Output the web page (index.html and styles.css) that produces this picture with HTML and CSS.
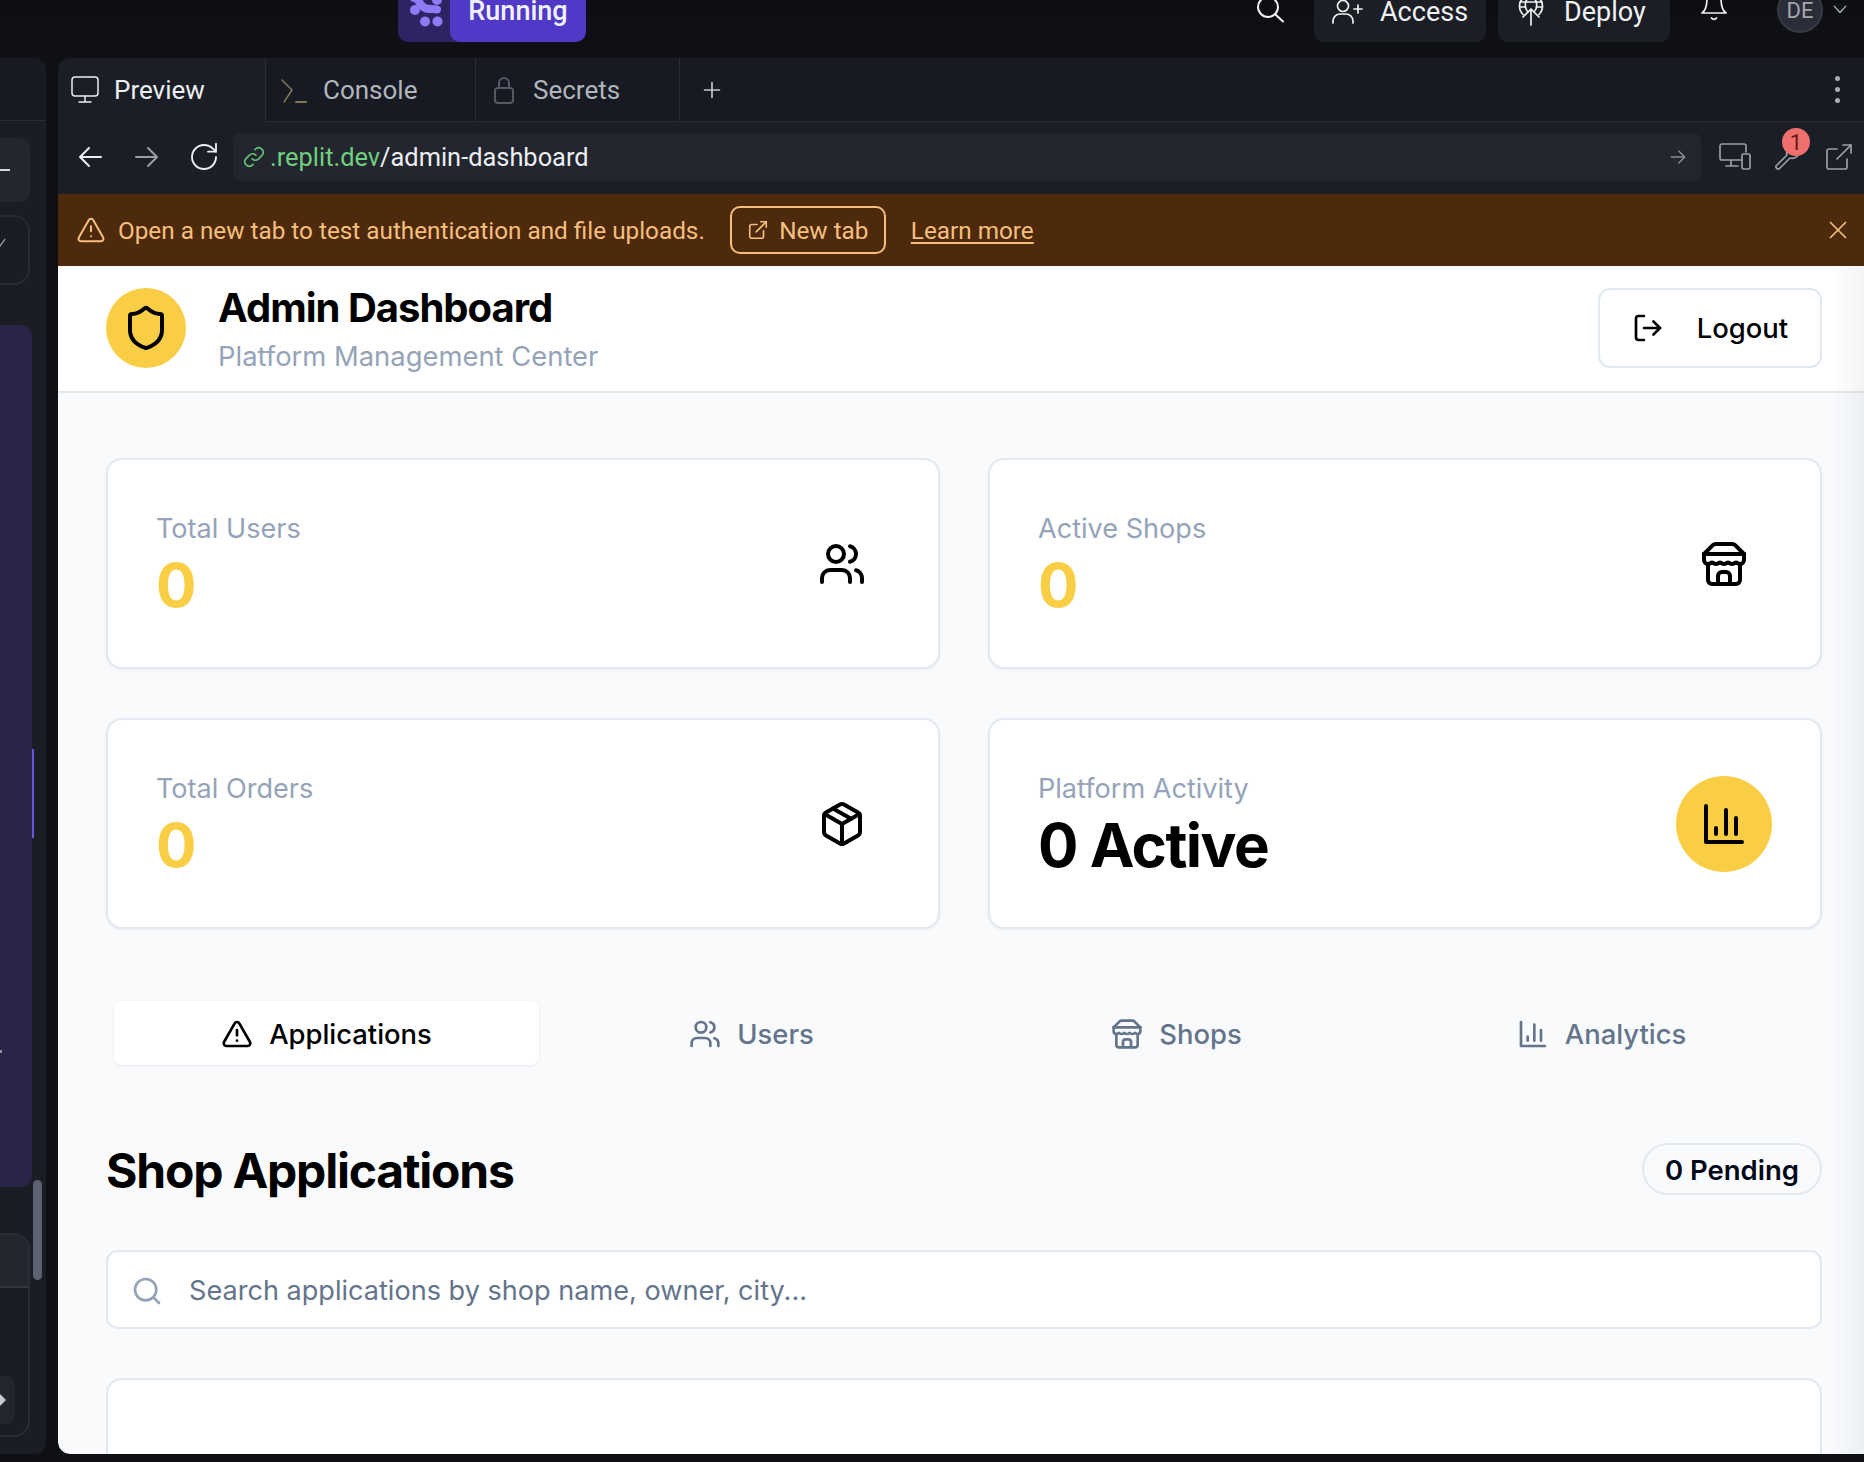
FILE: index.html
```html
<!DOCTYPE html>
<html lang="en">
<head>
<meta charset="UTF-8">
<title>Admin Dashboard</title>
<link rel="stylesheet" href="styles.css">
</head>
<body>
<div class="topbar">
    <div class="run-group">
        <span class="run-logo">
            <svg width="40" height="28" viewBox="0 0 40 28">
                <circle cx="11" cy="10" r="5"/><circle cx="21" cy="21.5" r="5"/><circle cx="33.5" cy="21.5" r="5"/><circle cx="33" cy="0" r="5"/>
                <path class="run-wave" d="M10 -2c5 0 6 9 12 10.500 4 1 8 0 11 1"/>
            </svg>
        </span>
        <span class="run-btn">Running</span>
    </div>
    <div class="top-right">
        <svg class="top-search" viewBox="0 0 34 34"><circle cx="14" cy="14" r="10"/><path d="M21.500 21.500 29 28.500"/></svg>
        <span class="top-btn">
            <svg class="top-btn-icon" viewBox="0 0 34 34"><circle cx="13" cy="11" r="5.500"/><path d="M3 28v-2a7 7 0 0 1 7-7h6a7 7 0 0 1 7 7v2"/><path d="M28 10v8M24 14h8"/></svg>
            Access
        </span>
        <span class="top-btn">
            <svg class="top-btn-icon" viewBox="0 0 34 34"><path d="M9 19.500a11.500 11.500 0 1 1 16 0"/><path d="M17 0c-7 5-7 13-3 17M17 0c7 5 7 13 3 17M6 7h22M6 12h5M23 12h5"/><path d="M17 30V14M9 22l8-8 8 8"/></svg>
            Deploy
        </span>
        <svg class="top-bell" viewBox="0 0 28 34"><path d="M7 8a7 7 0 0 1 14 0c0 9 2 13 5 15H2c3-2 5-6 5-15"/><path d="M11.500 28a3 3 0 0 0 5 0"/></svg>
        <span class="avatar">DE</span>
        <svg class="chevron" viewBox="0 0 24 24"><path d="m2 7 10 11L22 7"/></svg>
    </div>
</div>

<div class="workspace">
    <div class="side-pane">
        <div class="side-head"></div>
        <div class="side-plus"><i></i></div>
        <div class="side-outline"><svg width="14" height="14" viewBox="0 0 24 24"><path d="m2 8 10 10 10-14"/></svg></div>
        <div class="side-chat"><i class="side-tick"></i><i class="side-marker"></i></div>
        <div class="side-bottom">
            <div class="side-input"></div>
            <div class="side-send"><i></i></div>
        </div>
        <i class="side-scroll"></i>
    </div>

    <div class="main-pane">
        <div class="tabs">
            <div class="tab active">
                <svg class="tab-icon" viewBox="0 0 28 28"><rect x="1" y="1" width="26" height="19" rx="3"/><path d="M14 20v6M8 26h12"/></svg>
                Preview
            </div>
            <div class="tab">
                <svg class="tab-icon console" viewBox="0 0 28 28"><path d="m2 4 10 10-8 12"/><path class="prompt" d="M16 26h10"/></svg>
                Console
            </div>
            <div class="tab">
                <svg class="tab-icon lock" viewBox="0 0 28 28"><rect x="5" y="12" width="18" height="15" rx="3"/><path d="M9 12V7a5 5 0 0 1 10 0v5"/></svg>
                Secrets
            </div>
            <svg class="plus" viewBox="0 0 24 24"><path d="M12 3v18M3 12h18"/></svg>
            <div class="kebab"><i></i><i></i><i></i></div>
        </div>

        <div class="urlbar">
            <svg class="nav-icon" viewBox="0 0 24 24"><path d="M23 12H2M11 3l-9 9 9 9"/></svg>
            <svg class="nav-icon dim" viewBox="0 0 24 24"><path d="M1 12h21M13 3l9 9-9 9"/></svg>
            <svg class="nav-icon" viewBox="0 0 24 24"><path d="M21 12a9 9 0 1 1-9-9c2.520 0 4.930 1 6.740 2.740L21 8"/><path d="M21 2v6h-6"/></svg>
            <div class="url-input">
                <svg class="link-icon" viewBox="0 0 24 24"><path d="M10 14a5 5 0 0 0 7 0l4-4a5 5 0 0 0-7-7l-1 1"/><path d="M14 10a5 5 0 0 0-7 0l-4 4a5 5 0 0 0 7 7l1-1"/></svg>
                <span class="url-host">.replit.dev</span><span class="url-path">/admin-dashboard</span>
                <svg class="go-icon" viewBox="0 0 24 24"><path d="M3 12h18M13 4l8 8-8 8"/></svg>
            </div>
            <div class="url-tools">
                <svg class="tool-icon" viewBox="0 0 32 28"><path d="M22 17H3a2 2 0 0 1-2-2V3a2 2 0 0 1 2-2h22a2 2 0 0 1 2 2v6"/><path d="M12 17v6M7 23h12"/><rect x="23" y="11" width="8" height="15" rx="1.500"/></svg>
                <span class="tool-wrap">
                    <svg class="tool-icon" viewBox="0 0 28 28"><path d="M22 3a7 7 0 0 0-8 9L3 23a2.500 2.500 0 0 0 3 3l11-11a7 7 0 0 0 9-8l-5 4-4-1-1-4z"/></svg>
                    <span class="badge">1</span>
                </span>
                <svg class="tool-icon" viewBox="0 0 28 28"><path d="M18 2h8v8"/><path d="M12 16 26 2"/><path d="M22 16v8a2 2 0 0 1-2 2H4a2 2 0 0 1-2-2V8a2 2 0 0 1 2-2h8"/></svg>
            </div>
        </div>

        <div class="notice">
            <svg class="notice-icon" viewBox="0 0 24 24"><path d="m21.730 18-8-14a2 2 0 0 0-3.480 0l-8 14A2 2 0 0 0 4 21h16a2 2 0 0 0 1.730-3"/><path d="M12 9v4"/><path d="M12 17h.01"/></svg>
            <span>Open a new tab to test authentication and file uploads.</span>
            <span class="notice-btn">
                <svg viewBox="0 0 24 24"><path d="M15 3h6v6"/><path d="M10 14 21 3"/><path d="M18 13v6a2 2 0 0 1-2 2H5a2 2 0 0 1-2-2V8a2 2 0 0 1 2-2h6"/></svg>
                New tab
            </span>
            <a class="notice-link">Learn more</a>
            <svg class="notice-close" viewBox="0 0 24 24"><path d="M3 3l18 18M21 3 3 21"/></svg>
        </div>

        <div class="page">
            <div class="page-head">
                <div class="brand">
                    <span class="brand-mark">
                        <svg class="icon-lg" viewBox="0 0 24 24"><path d="M20 13c0 5-3.500 7.500-7.660 8.950a1 1 0 0 1-.67-.01C7.500 20.500 4 18 4 13V6a1 1 0 0 1 1-1c2 0 4.500-1.200 6.240-2.720a1.170 1.170 0 0 1 1.520 0C14.510 3.810 17 5 19 5a1 1 0 0 1 1 1z"/></svg>
                    </span>
                    <div class="brand-text">
                        <h1>Admin Dashboard</h1>
                        <p>Platform Management Center</p>
                    </div>
                </div>
                <button class="logout">
                    <svg viewBox="0 0 24 24"><path d="M9 21H5a2 2 0 0 1-2-2V5a2 2 0 0 1 2-2h4"/><polyline points="16 17 21 12 16 7"/><line x1="21" x2="9" y1="12" y2="12"/></svg>
                    Logout
                </button>
            </div>

            <div class="content">
                <div class="stats">
                    <div class="card">
                        <div class="card-text">
                            <div class="card-label">Total Users</div>
                            <div class="card-value">0</div>
                        </div>
                        <span class="card-icon">
                            <svg class="icon-lg" viewBox="0 0 24 24"><path d="M16 21v-2a4 4 0 0 0-4-4H6a4 4 0 0 0-4 4v2"/><circle cx="9" cy="7" r="4"/><path d="M22 21v-2a4 4 0 0 0-3-3.870"/><path d="M16 3.130a4 4 0 0 1 0 7.750"/></svg>
                        </span>
                    </div>
                    <div class="card">
                        <div class="card-text">
                            <div class="card-label">Active Shops</div>
                            <div class="card-value">0</div>
                        </div>
                        <span class="card-icon">
                            <svg class="icon-lg" viewBox="0 0 24 24"><path d="m2 7 4.410-4.410A2 2 0 0 1 7.830 2h8.340a2 2 0 0 1 1.420.59L22 7"/><path d="M4 12v8a2 2 0 0 0 2 2h12a2 2 0 0 0 2-2v-8"/><path d="M15 22v-4a2 2 0 0 0-2-2h-2a2 2 0 0 0-2 2v4"/><path d="M2 7h20"/><path d="M22 7v3a2 2 0 0 1-2 2a2.700 2.700 0 0 1-1.590-.63.7.7 0 0 0-.82 0A2.700 2.700 0 0 1 16 12a2.700 2.700 0 0 1-1.590-.63.7.7 0 0 0-.82 0A2.700 2.700 0 0 1 12 12a2.700 2.700 0 0 1-1.590-.63.7.7 0 0 0-.82 0A2.700 2.700 0 0 1 8 12a2.700 2.700 0 0 1-1.590-.63.7.7 0 0 0-.82 0A2.700 2.700 0 0 1 4 12a2 2 0 0 1-2-2V7"/></svg>
                        </span>
                    </div>
                    <div class="card">
                        <div class="card-text">
                            <div class="card-label">Total Orders</div>
                            <div class="card-value">0</div>
                        </div>
                        <span class="card-icon">
                            <svg class="icon-lg" viewBox="0 0 24 24"><path d="m7.500 4.270 9 5.150"/><path d="M21 8a2 2 0 0 0-1-1.730l-7-4a2 2 0 0 0-2 0l-7 4A2 2 0 0 0 3 8v8a2 2 0 0 0 1 1.730l7 4a2 2 0 0 0 2 0l7-4A2 2 0 0 0 21 16Z"/><path d="m3.300 7 8.700 5 8.700-5"/><path d="M12 22V12"/></svg>
                        </span>
                    </div>
                    <div class="card">
                        <div class="card-text">
                            <div class="card-label">Platform Activity</div>
                            <div class="card-value dark">0 Active</div>
                        </div>
                        <span class="card-icon filled">
                            <svg class="icon-lg" viewBox="0 0 24 24"><path d="M3 3v18h18"/><path d="M18 17V9"/><path d="M13 17V5"/><path d="M8 17v-3"/></svg>
                        </span>
                    </div>
                </div>

                <div class="section-tabs">
                    <div class="section-tab active">
                        <svg viewBox="0 0 24 24"><path d="m21.730 18-8-14a2 2 0 0 0-3.480 0l-8 14A2 2 0 0 0 4 21h16a2 2 0 0 0 1.730-3"/><path d="M12 9v4"/><path d="M12 17h.01"/></svg>
                        Applications
                    </div>
                    <div class="section-tab">
                        <svg viewBox="0 0 24 24"><path d="M16 21v-2a4 4 0 0 0-4-4H6a4 4 0 0 0-4 4v2"/><circle cx="9" cy="7" r="4"/><path d="M22 21v-2a4 4 0 0 0-3-3.870"/><path d="M16 3.130a4 4 0 0 1 0 7.750"/></svg>
                        Users
                    </div>
                    <div class="section-tab">
                        <svg viewBox="0 0 24 24"><path d="m2 7 4.410-4.410A2 2 0 0 1 7.830 2h8.340a2 2 0 0 1 1.420.59L22 7"/><path d="M4 12v8a2 2 0 0 0 2 2h12a2 2 0 0 0 2-2v-8"/><path d="M15 22v-4a2 2 0 0 0-2-2h-2a2 2 0 0 0-2 2v4"/><path d="M2 7h20"/><path d="M22 7v3a2 2 0 0 1-2 2a2.700 2.700 0 0 1-1.590-.63.7.7 0 0 0-.82 0A2.700 2.700 0 0 1 16 12a2.700 2.700 0 0 1-1.590-.63.7.7 0 0 0-.82 0A2.700 2.700 0 0 1 12 12a2.700 2.700 0 0 1-1.590-.63.7.7 0 0 0-.82 0A2.700 2.700 0 0 1 8 12a2.700 2.700 0 0 1-1.590-.63.7.7 0 0 0-.82 0A2.700 2.700 0 0 1 4 12a2 2 0 0 1-2-2V7"/></svg>
                        Shops
                    </div>
                    <div class="section-tab">
                        <svg viewBox="0 0 24 24"><path d="M3 3v18h18"/><path d="M18 17V9"/><path d="M13 17V5"/><path d="M8 17v-3"/></svg>
                        Analytics
                    </div>
                </div>

                <div class="section-head">
                    <h2>Shop Applications</h2>
                    <span class="pending">0 Pending</span>
                </div>

                <div class="search">
                    <svg viewBox="0 0 24 24"><circle cx="11" cy="11" r="8"/><path d="m21 21-4.300-4.300"/></svg>
                    <span>Search applications by shop name, owner, city...</span>
                </div>

                <div class="list-card"></div>
            </div>
            <i class="edge-shade"></i>
        </div>
    </div>
</div>
</body>
</html>
```

FILE: styles.css
```css
* {
    box-sizing: border-box;
}
html, body {
    margin: 0;
    width: 1864px;
    height: 1462px;
    overflow: hidden;
}
body {
    background: #0e1014;
    font-family: Inter, "Liberation Sans", sans-serif;
}
svg {
    fill: none;
    stroke: currentColor;
    stroke-linecap: round;
    stroke-linejoin: round;
    flex: none;
}
i {
    display: block;
}

/* top bar */
.topbar {
    height: 58px;
    padding-bottom: 16px;
    display: flex;
    align-items: flex-end;
    overflow: hidden;
    font-family: Roboto, sans-serif;
    color: #f0f1f3;
    background: linear-gradient(#0c0e12, #0f1116);
}
.run-group {
    margin-left: 398px;
    display: flex;
    height: 60px;
    border-radius: 0 0 10px 10px;
    background: #2d2463;
    overflow: hidden;
}
.run-logo {
    width: 52px;
    display: flex;
    justify-content: center;
    align-items: flex-start;
    margin-top: 18px;
}
.run-logo svg {
    stroke: none;
    fill: #8f7bf5;
    overflow: visible;
}
.run-logo .run-wave {
    fill: none;
    stroke: #8f7bf5;
    stroke-width: 8;
}
.run-btn {
    width: 136px;
    padding-top: 19px;
    border-radius: 10px 0 10px 10px;
    background: #4f39c6;
    font-size: 27px;
    font-weight: 500;
    line-height: 20px;
    text-align: center;
}
.top-right {
    margin-left: auto;
    padding-right: 17px;
    display: flex;
    align-items: center;
    height: 60px;
}
.top-search {
    width: 34px;
    height: 34px;
    margin: 0 26px 5px 0;
    stroke-width: 2;
}
.top-btn {
    width: 172px;
    height: 60px;
    margin-right: 12px;
    padding: 0 0 1px 16px;
    display: flex;
    align-items: center;
    gap: 16px;
    border-radius: 10px;
    background: #1b1e25;
    font-size: 27px;
    line-height: 20px;
}
.top-btn-icon {
    width: 34px;
    height: 34px;
    stroke-width: 1.7;
}
.top-bell {
    width: 28px;
    height: 34px;
    margin: 0 0 10px 18px;
    stroke-width: 1.7;
}
.avatar {
    width: 46px;
    height: 46px;
    margin: 5px 0 0 49px;
    align-self: flex-start;
    display: flex;
    align-items: center;
    justify-content: center;
    border: 2px solid #363a44;
    border-radius: 50%;
    background: #2a2d37;
    color: #a2a6b0;
    font-size: 22px;
}
.chevron {
    width: 14px;
    height: 14px;
    margin: 0 0 6px 10px;
    stroke-width: 2;
    color: #b8bcc4;
}

/* panes */
.workspace {
    height: 1396px;
    display: flex;
    gap: 12px;
}
.side-pane {
    width: 46px;
    height: 1396px;
    position: relative;
    padding-right: 16px;
    overflow: hidden;
    border-radius: 0 12px 12px 0;
    background: #1a1d24;
}
.side-head {
    height: 63px;
    margin-right: -16px;
    border-bottom: 1px solid #2a2d35;
    background: #171a21;
}
.side-plus {
    height: 64px;
    margin: 17px 0 0 -20px;
    position: relative;
    border-radius: 10px;
    background: #23262e;
}
.side-plus i {
    position: absolute;
    right: 20px;
    top: 31px;
    width: 10px;
    height: 2px;
    background: #d5d7dc;
}
.side-outline {
    height: 70px;
    margin: 13px 0 0 -20px;
    position: relative;
    border: 2px solid #282b33;
    border-radius: 16px;
    color: #8f939c;
}
.side-outline svg {
    position: absolute;
    left: 10px;
    top: 20px;
    stroke-width: 2.5;
}
.side-chat {
    height: 862px;
    margin: 40px -2px 0 -20px;
    position: relative;
    border-radius: 12px;
    background: #2a2546;
}
.side-marker {
    position: absolute;
    right: -2px;
    top: 424px;
    width: 2px;
    height: 89px;
    background: #6a55e0;
}
.side-tick {
    position: absolute;
    left: 20px;
    top: 725px;
    width: 2px;
    height: 3px;
    background: #8f939c;
}
.side-bottom {
    height: 204px;
    margin: 46px 0 0 -20px;
    position: relative;
    border: 2px solid #2a2d35;
    border-radius: 16px;
    background: #1a1d24;
}
.side-input {
    height: 53px;
    border-bottom: 2px solid #33363e;
    background: #23262e;
    border-radius: 14px 14px 0 0;
}
.side-send {
    position: absolute;
    left: 0;
    right: 13px;
    bottom: 11px;
    height: 48px;
    border-radius: 8px;
    background: #23262e;
}
.side-send i {
    position: absolute;
    right: 9px;
    top: 18px;
    width: 0;
    height: 0;
    border-left: 6px solid #c9ccd2;
    border-top: 6px solid transparent;
    border-bottom: 6px solid transparent;
}
.side-scroll {
    position: absolute;
    left: 33px;
    top: 1122px;
    width: 9px;
    height: 100px;
    border-radius: 5px;
    background: #5c6270;
}
.main-pane {
    flex: 1;
    min-width: 0;
    height: 1396px;
    display: flex;
    flex-direction: column;
    overflow: hidden;
    border-radius: 12px 0 0 12px;
    background: #1a1e26;
}

/* tab row */
.tabs {
    height: 64px;
    flex: none;
    display: flex;
    align-items: center;
    border-bottom: 1px solid #2a2d35;
    background: #171a22;
    font-family: Roboto, sans-serif;
    font-size: 26px;
    color: #b1b5bc;
}
.tab {
    height: 63px;
    width: 210px;
    padding-left: 14px;
    display: flex;
    align-items: center;
    gap: 15px;
    border-right: 1px solid #2a2d35;
}
.tab.active {
    width: 208px;
    margin-bottom: -1px;
    height: 64px;
    padding-left: 13px;
    background: #1a1e26;
    color: #eceef1;
}
.tab:nth-child(3) {
    width: 204px;
}
.tab-icon {
    width: 28px;
    height: 28px;
    stroke-width: 1.5;
}
.console {
    color: #7e7a55;
}
.console .prompt {
    stroke-width: 2;
}
.lock {
    color: #555a64;
    stroke-width: 2;
}
.plus {
    width: 20px;
    height: 20px;
    margin-left: 22px;
    stroke-width: 2;
    color: #c3c6cc;
}
.kebab {
    margin-left: auto;
    margin-right: 24px;
    display: flex;
    flex-direction: column;
    gap: 6px;
}
.kebab i {
    width: 5px;
    height: 5px;
    border-radius: 50%;
    background: #a9adb5;
}

/* address row */
.urlbar {
    height: 70px;
    flex: none;
    padding: 0 0 0 20px;
    display: flex;
    align-items: center;
}
.nav-icon {
    width: 24px;
    height: 24px;
    margin-right: 32px;
    color: #eceef1;
    stroke-width: 2;
}
.nav-icon.dim {
    margin-left: 1px;
    color: #9a9ea6;
}
.nav-icon:nth-child(3) {
    width: 32px;
    height: 32px;
    margin-right: 13px;
    margin-left: -3px;
    stroke-width: 1.4;
}
.url-input {
    width: 1468px;
    height: 48px;
    padding: 0 14px 0 10px;
    display: flex;
    align-items: center;
    border-radius: 8px;
    background: #23262e;
    font-family: Roboto, sans-serif;
    font-size: 25.4px;
}
.link-icon {
    width: 22px;
    height: 22px;
    margin-right: 5px;
    stroke-width: 1.8;
    color: #63c174;
}
.url-host {
    color: #6fcf7f;
}
.url-path {
    color: #eceef1;
}
.go-icon {
    width: 18px;
    height: 18px;
    margin-left: auto;
    stroke-width: 1.8;
    color: #8a8e96;
}
.url-tools {
    display: flex;
    align-items: center;
    gap: 20px;
    padding-left: 18px;
}
.tool-icon {
    width: 32px;
    height: 28px;
    stroke-width: 1.7;
    color: #9a9ea6;
}
.tool-wrap {
    position: relative;
    display: flex;
}
.badge {
    position: absolute;
    left: 11px;
    top: -15px;
    width: 28px;
    height: 28px;
    display: flex;
    align-items: center;
    justify-content: center;
    border-radius: 50%;
    background: #ef6f6c;
    color: #6b1414;
    font-family: Roboto, sans-serif;
    font-size: 22px;
}

/* warning strip */
.notice {
    height: 72px;
    flex: none;
    margin-top: 2px;
    padding: 0 16px 0 18px;
    display: flex;
    align-items: center;
    background: #4e2a0c;
    color: #f5bf7e;
    font-family: Roboto, sans-serif;
    font-size: 24.3px;
}
.notice-icon {
    width: 30px;
    height: 30px;
    margin-right: 12px;
    stroke-width: 1.6;
}
.notice-btn {
    width: 156px;
    height: 48px;
    margin-left: 25px;
    display: flex;
    align-items: center;
    justify-content: center;
    gap: 10px;
    border: 2px solid #f5bf7e;
    border-radius: 10px;
}
.notice-btn svg {
    width: 22px;
    height: 22px;
    stroke-width: 1.8;
}
.notice-link {
    margin-left: 25px;
    text-decoration: underline;
    text-underline-offset: 3px;
}
.notice-close {
    width: 20px;
    height: 20px;
    margin-left: auto;
    stroke-width: 2;
}

/* page in the preview */
.page {
    flex: 1;
    min-height: 0;
    position: relative;
    overflow: hidden;
    border-radius: 0 0 0 12px;
    background: #f8fafc;
}
.page-head {
    height: 127px;
    padding: 0 42px 2px 48px;
    display: flex;
    align-items: center;
    justify-content: space-between;
    background: #fff;
    border-bottom: 2px solid #e2e8f0;
}
.brand {
    display: flex;
    align-items: center;
    gap: 32px;
}
.brand-mark {
    width: 80px;
    height: 80px;
    display: flex;
    align-items: center;
    justify-content: center;
    border-radius: 50%;
    background: #f9ce45;
}
.brand-text {
    margin-top: 9px;
}
.icon-lg {
    width: 48px;
    height: 48px;
    stroke-width: 2;
    color: #000;
}
h1 {
    margin: 0;
    font-size: 40px;
    font-weight: 700;
    letter-spacing: -0.025em;
    line-height: 48px;
    color: #000;
}
.brand p {
    margin: 0;
    font-size: 27.4px;
    line-height: 48px;
    color: #94a3b8;
}
.logout {
    width: 224px;
    height: 80px;
    padding: 0 32px;
    display: flex;
    align-items: center;
    justify-content: space-between;
    border: 2px solid #e2e8f0;
    border-radius: 12px;
    background: #fff;
    font-family: inherit;
    font-size: 27.4px;
    font-weight: 500;
    color: #000;
}
.logout svg {
    width: 32px;
    height: 32px;
    stroke-width: 2;
}
.content {
    padding: 65px 42px 0 48px;
}
.stats {
    display: grid;
    grid-template-columns: 1fr 1fr;
    gap: 49px 48px;
}
.card {
    height: 211px;
    padding: 0 48px;
    display: flex;
    align-items: center;
    justify-content: space-between;
    border: 2px solid #e2e8f0;
    border-radius: 16px;
    background: #fff;
    box-shadow: 0 1px 3px rgba(15, 23, 42, 0.06);
}
.card-text {
    padding-top: 2px;
}
.card-label {
    font-size: 27.1px;
    line-height: 40px;
    color: #94a3b8;
}
.card-value {
    font-size: 60px;
    font-weight: 700;
    letter-spacing: -0.025em;
    line-height: 72px;
    color: #f9ce45;
}
.card-value.dark {
    color: #000;
}
.card-icon {
    width: 96px;
    height: 96px;
    display: flex;
    align-items: center;
    justify-content: center;
    border-radius: 50%;
}
.card-icon.filled {
    background: #f9ce45;
}
.section-tabs {
    margin-top: 72px;
    padding: 0 8px;
    display: grid;
    grid-template-columns: repeat(4, 1fr);
}
.section-tab {
    height: 64px;
    padding-top: 1px;
    display: flex;
    align-items: center;
    justify-content: center;
    gap: 16px;
    border-radius: 8px;
    font-size: 27.4px;
    font-weight: 500;
    color: #64748b;
}
.section-tab.active {
    background: #fff;
    color: #000;
    box-shadow: 0 1px 3px rgba(15, 23, 42, 0.08);
}
.section-tab svg {
    width: 32px;
    height: 32px;
    stroke-width: 2;
}
.section-head {
    margin-top: 78px;
    height: 52px;
    display: flex;
    align-items: center;
    justify-content: space-between;
}
h2 {
    margin: 0;
    padding-top: 3px;
    font-size: 48px;
    font-weight: 700;
    letter-spacing: -0.025em;
    color: #000;
}
.pending {
    height: 52px;
    padding: 1px 21px 0;
    display: flex;
    align-items: center;
    border: 2px solid #e2e8f0;
    border-radius: 26px;
    font-size: 27.5px;
    font-weight: 600;
    color: #020817;
}
.search {
    height: 79px;
    margin-top: 55px;
    padding: 2px 23px 0;
    display: flex;
    align-items: center;
    gap: 26px;
    border: 2px solid #e2e8f0;
    border-radius: 12px;
    background: #fff;
    font-size: 27.1px;
    color: #64748b;
}
.search svg {
    width: 32px;
    height: 32px;
    stroke-width: 2;
    color: #94a3b8;
}
.list-card {
    height: 160px;
    margin-top: 49px;
    border: 2px solid #e2e8f0;
    border-radius: 16px;
    background: #fff;
}
.edge-shade {
    position: absolute;
    top: 0;
    right: 0;
    bottom: 0;
    width: 32px;
    background: linear-gradient(90deg, rgba(30, 41, 59, 0), rgba(30, 41, 59, 0.05));
}
```
